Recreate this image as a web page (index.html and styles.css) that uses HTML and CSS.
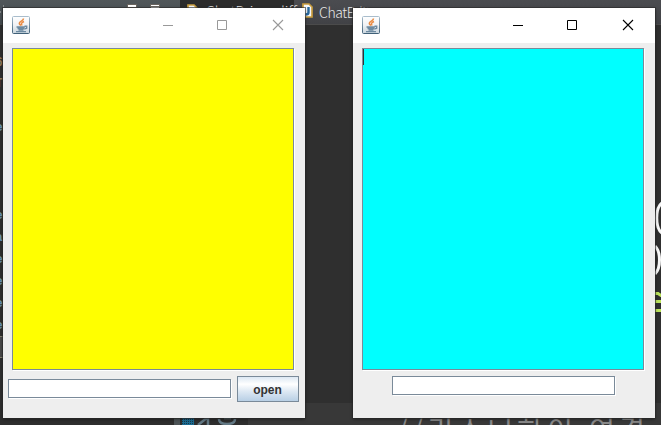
FILE: index.html
```html
<!DOCTYPE html>
<html lang="ko">
<head>
<meta charset="utf-8">
<title>Chat</title>
<link rel="stylesheet" href="styles.css">
</head>
<body>
<svg width="0" height="0" class="defs">
  <symbol id="java" viewBox="0 0 18 18">
    <linearGradient id="tile" x2="0" y2="1"><stop stop-color="#fff"/><stop offset=".5" stop-color="#f0f2f5"/><stop offset="1" stop-color="#c9d5de"/></linearGradient>
    <linearGradient id="edge" x2="0" y2="1"><stop stop-color="#a9bdcc"/><stop offset="1" stop-color="#406078"/></linearGradient>
    <rect x=".5" y=".5" width="17" height="17" rx="1" fill="url(#tile)" stroke="url(#edge)"/>
    <path d="M11.500 2.500C11.500 5 7 5.200 7.300 7.500Q7.500 8.500 9 9.500M12 5.500C8.500 7 9.500 7.500 9.800 9.500" fill="none" stroke="#e98a42" stroke-width="1.500"/>
    <path d="M4.500 11h8.500M5.500 12.500h6.500M6.500 14h5M4 15.600h10M12.500 10.200h2.200v2l-2.500 1" fill="none" stroke="#6d8aa1" stroke-width="1.400"/>
  </symbol>
  <symbol id="min" viewBox="0 0 12 12"><path d="M1 6.500h10" stroke="currentColor"/></symbol>
  <symbol id="max" viewBox="0 0 12 12"><path d="M1.500 1.500h9v9h-9z" fill="none" stroke="currentColor"/></symbol>
  <symbol id="close" viewBox="0 0 12 12"><path d="M1 1l10 10M11 1L1 11" stroke="currentColor" stroke-width="1.100"/></symbol>
  <symbol id="file" viewBox="0 0 11 15"><path d="M1 1h6l3 3v10H1z" fill="#f4f7fa" stroke="#c99d3e" stroke-width="1.700"/><path d="M6.500 4v5.500q0 2-3 2" fill="none" stroke="#28679b" stroke-width="2.400"/></symbol>
</svg>
<div class="desktop">
  <div class="toolbar"></div>
  <div class="tab-active"></div>
  <div class="statusbar"></div>
  <svg class="file file-one"><use href="#file"/></svg>
  <svg class="file file-two"><use href="#file"/></svg>
  <span class="tab tab-one">ChatDriver.diff</span>
  <span class="tab tab-two">ChatEdit</span>
  <svg class="marks" viewBox="0 0 661 425">
    <path d="M127 4h10v4h-10zM150 4h10v4h-10z" fill="#69645f"/>
    <path d="M128 5h8v2h-8zM151 5h8v1h-8zM151 7h8v1h-8z" fill="#fff"/>
    <path d="M0 12h1M3 6h1" stroke="#bbb"/>
    <path d="M0 336h3v21H0z" fill="#494949"/><path d="M0 336.500h3M0 357.500h3" stroke="#858170"/>
    <path d="M662 203C655 208 655 228 662 233M655 246C661 252 661 268 655 274" fill="none" stroke="#f8f8f8" stroke-width="3"/>
    <path d="M655 293.500h3l3 2h2M655 301.500h6M655 310.500h6" fill="none" stroke="#bce45c" stroke-width="3"/>
    <path d="M174 418h6v7h-6z" fill="#4c5356"/>
    <path d="M182 418h12v7h-12z" fill="#1b6b92"/><path d="M182 419.500h12M182 421.500h12M182 423.500h12" stroke="#173848" stroke-dasharray="1 1"/>
    <path d="M198 425l10-8M208 417v8M219 419q0 5 8 5t8-5M224 418h7" fill="none" stroke="#637985" stroke-width="2.500"/>
  </svg>
  <span class="code c1">6</span><span class="code c2">T</span>
  <span class="code c3">e</span><span class="code c4">e</span><span class="code c5">a</span>
  <span class="code c6">e</span><span class="code c7">e</span><span class="code c8">e</span><span class="code c9">e</span>
  <span class="comment">//리스너하이 연결</span>

  <section class="window left">
    <header class="titlebar">
      <svg class="java"><use href="#java"/></svg>
      <div class="controls"><svg><use href="#min"/></svg><svg><use href="#max"/></svg><svg><use href="#close"/></svg></div>
    </header>
    <main class="content">
      <div class="area yellow"></div>
      <div class="row"><div class="field"></div><button class="open">open</button></div>
    </main>
  </section>
  <section class="window right">
    <header class="titlebar">
      <svg class="java"><use href="#java"/></svg>
      <div class="controls"><svg><use href="#min"/></svg><svg><use href="#max"/></svg><svg><use href="#close"/></svg></div>
    </header>
    <main class="content">
      <div class="area cyan"><i class="caret"></i></div>
      <div class="row"><div class="field"></div></div>
    </main>
  </section>
</div>
</body>
</html>
```
FILE: styles.css
```css
* { box-sizing: border-box; }
body { margin: 0; overflow: hidden; }
.defs { position: absolute; }
.desktop { position: relative; width: 661px; height: 425px; overflow: hidden; background: #2f2f2f; font-family: "Noto Sans", "Noto Sans CJK KR", sans-serif; }
.toolbar { position: absolute; top: 0; left: 0; width: 661px; height: 25px; background: linear-gradient(#4b4c50, #414246); border-bottom: 1px solid #4b4b4b; }
.toolbar::before { content: ""; display: block; width: 180px; height: 24px; background: linear-gradient(#51575a, #454c50); }
.tab-active { position: absolute; top: 0; left: 180px; width: 114px; height: 25px; background: #2c2c2c; }
.statusbar { position: absolute; top: 403px; left: 0; width: 661px; height: 22px; background: #383838; }
.statusbar::before { content: ""; display: block; width: 248px; height: 22px; background: #2e2e2e; }
.file { position: absolute; width: 11px; height: 15px; }
.file-one { left: 187px; top: 4px; }
.file-two { left: 302px; top: 3px; }
.tab { position: absolute; white-space: nowrap; font: 14px/18px "Noto Sans CJK KR", "Noto Sans", sans-serif; font-weight: 300; color: #e8e8e8; }
.tab-one { left: 206px; top: 2px; }
.tab-two { left: 319px; top: 3px; letter-spacing: -.4px; }
.marks { position: absolute; left: 0; top: 0; width: 661px; height: 425px; }
.code { position: absolute; left: -5px; font: bold 13px/14px "Liberation Mono", monospace; color: #6d93ad; }
.c1 { top: 56px; color: #92795a; }
.c2 { top: 77px; color: #92795a; }
.c3 { top: 121px; }
.c4 { top: 209px; }
.c5 { top: 231px; }
.c6 { top: 253px; }
.c7 { top: 275px; }
.c8 { top: 297px; }
.c9 { top: 319px; }
.comment { position: absolute; left: 397px; top: 412px; white-space: nowrap; font: 28px/34px "Noto Sans CJK KR", sans-serif; letter-spacing: 4.2px; color: #888; }

.window { position: absolute; top: 8px; width: 302px; height: 410px; background: #eee; box-shadow: 0 0 0 1px #29292999, 0 1px 3px #0008; }
.left { left: 3px; }
.right { left: 353px; }
.titlebar { display: flex; justify-content: space-between; height: 35px; padding: 8px 21px 0 9px; background: #fff; }
.java { width: 18px; height: 18px; }
.controls { display: flex; gap: 44px; padding-top: 3px; color: #000; }
.left .controls { color: #999; }
.controls svg { width: 12px; height: 12px; }
.controls svg:first-child { margin-right: -2px; }
.content { padding: 5px 0 0; }
.area, .field { border: 1px solid #7a8a99; box-shadow: 1px 1px #fff; }
.area { width: 282px; height: 322px; margin-left: 9px; }
.yellow { background: #ff0; }
.cyan { background: #0ff; }
.caret { display: block; width: 1px; height: 16px; background: #333; }
.row { display: flex; align-items: center; gap: 6px; height: 26px; margin: 6px 0 0 5px; }
.field { width: 223px; height: 19px; background: #fff; }
.left .field { margin-top: -1px; }
.right .row { margin-left: 39px; align-items: flex-start; }
.open { width: 62px; height: 26px; padding: 1px 1px 0 0; border: 1px solid #7a8a99; border-radius: 0; background: linear-gradient(#dde8f3, #fff 30%, #dde8f3 60%, #b8cfe5); color: #333; font: bold 12px/20px "Liberation Sans", sans-serif; }
```
